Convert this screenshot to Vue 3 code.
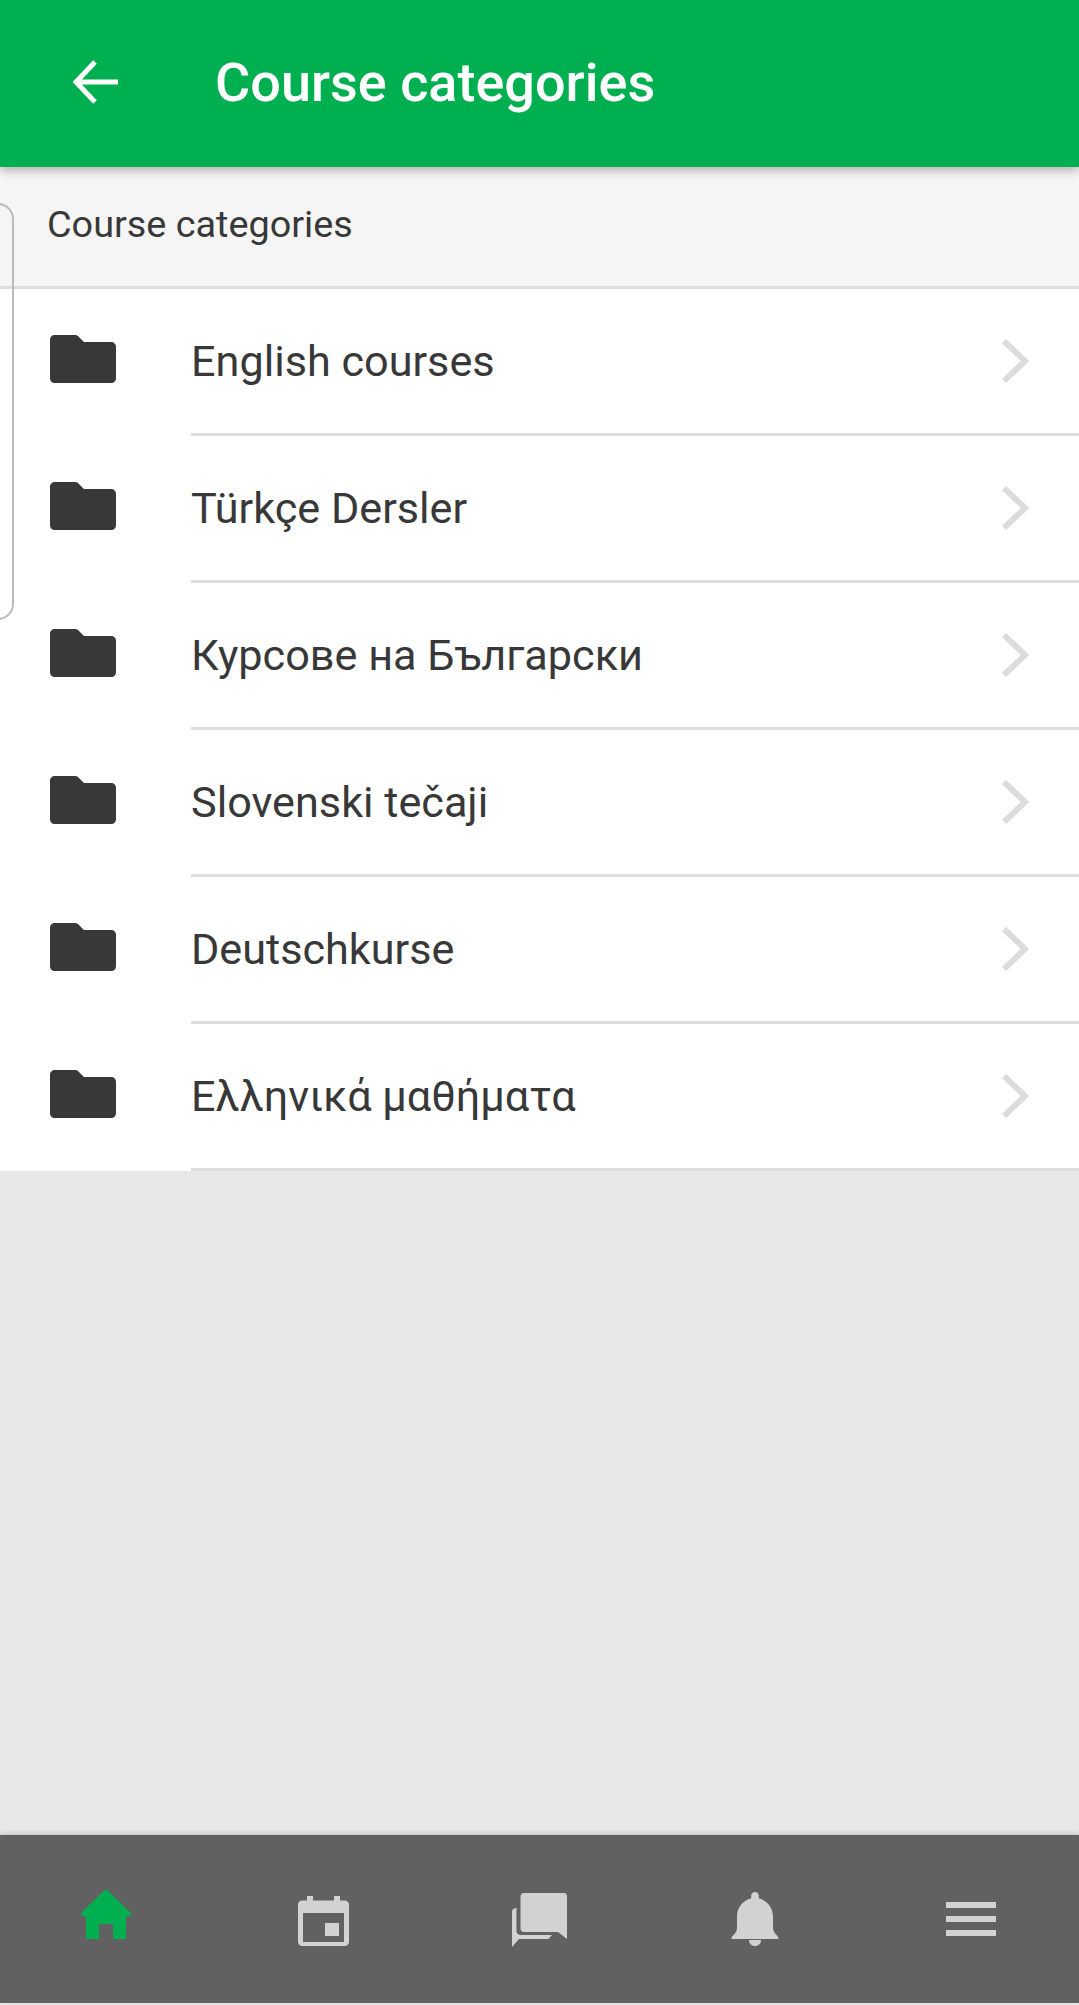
<script setup>
const categorias = [
  "English courses",
  "Türkçe Dersler",
  "Курсове на Български",
  "Slovenski tečaji",
  "Deutschkurse",
  "Ελληνικά μαθήματα",
];
</script>

<template>
  <div class="pagina">
    <header class="topo">
      <svg class="voltar" width="46" height="44" viewBox="0 0 46 44">
        <path d="M45 22H3M22 2 3 22l19 20" fill="none" stroke="#fff" stroke-width="5" />
      </svg>
      <h1>Course categories</h1>
    </header>

    <main class="conteudo">
      <div class="contorno"></div>
      <div class="trilha">Course categories</div>
      <ul class="lista">
        <li v-for="c in categorias" :key="c">
          <div class="icone">
            <svg width="66" height="48" viewBox="0 0 66 48">
              <path d="M5 0h20c1.500 0 2.500.5 3.500 1.500L34 7h27c3 0 5 2 5 5v31c0 3-2 5-5 5H5c-3 0-5-2-5-5V5c0-3 2-5 5-5z" fill="#383838" />
            </svg>
          </div>
          <div class="linha">
            <span>{{ c }}</span>
            <svg width="28" height="44" viewBox="0 0 28 44">
              <path d="M3 2l21 20L3 42" fill="none" stroke="#dcdcdc" stroke-width="6" />
            </svg>
          </div>
        </li>
      </ul>
    </main>

    <nav class="barra">
      <div class="item">
        <svg class="casa" width="52" height="50" viewBox="0 0 52 50">
          <path d="M26 0l26 25-6 3v22H33V35H19v15H6V28l-6-3z" fill="#00b050" />
        </svg>
      </div>
      <div class="item">
        <svg class="desce" width="51" height="50" viewBox="0 0 51 50">
          <path fill-rule="evenodd" d="M9 0h6v4.500h21V0h6v4.500h5c2.200 0 4 1.800 4 4V46c0 2.200-1.800 4-4 4H4c-2.200 0-4-1.800-4-4V8.500c0-2.200 1.800-4 4-4h5zM5 17v29h41V17zm22 10h14v13H27z" fill="#d2d2d2" />
        </svg>
      </div>
      <div class="item">
        <svg class="chat" width="55" height="54" viewBox="0 0 55 54">
          <path d="M12 0h40c1.800 0 3 1.200 3 3v43l-9-7H12c-2 0-3.500-1.500-3.500-3.500V3.500C8.500 1.500 10 0 12 0z" fill="#d2d2d2" />
          <path d="M4.500 15v23c0 2.500 2 4 4.500 4h31l-3.500 4H7l-7 8V18c0-1.500 2-3 4.500-3z" fill="#d2d2d2" />
        </svg>
      </div>
      <div class="item">
        <svg width="48" height="54" viewBox="0 0 48 54">
          <path d="M24 0c2.200 0 3.800 1.600 3.800 3.800v2.500C36 8.500 42 15 42 25v11c0 3 2 5.500 4 7.500 1.500 1.500 2 3.500 1 3.500H1c-1 0-.5-2 1-3.500 2-2 4-4.500 4-7.500V25c0-10 6-16.500 14.200-18.700V3.800C20.200 1.600 21.800 0 24 0z" fill="#d2d2d2" />
          <path d="M18 48h12c0 3.500-2.500 6-6 6s-6-2.500-6-6z" fill="#d2d2d2" />
        </svg>
      </div>
      <div class="item">
        <svg width="50" height="34" viewBox="0 0 50 34">
          <rect width="50" height="6" fill="#d2d2d2" />
          <rect y="14" width="50" height="6" fill="#d2d2d2" />
          <rect y="28" width="50" height="6" fill="#d2d2d2" />
        </svg>
      </div>
    </nav>
  </div>
</template>

<style>
html,
body {
  margin: 0;
  background: #e8e8e8;
}
</style>

<style scoped>
.pagina {
  height: 2005px;
  display: flex;
  flex-direction: column;
  font-family: Roboto, "Noto Sans", sans-serif;
  color: #383838;
  overflow: hidden;
}

.topo {
  height: 167px;
  flex-shrink: 0;
  background: #00b050;
  display: flex;
  align-items: center;
  padding-left: 73px;
  box-shadow: 0 3px 10px rgba(0, 0, 0, 0.3);
  position: relative;
  z-index: 2;
  box-sizing: border-box;
}

.topo h1 {
  margin: 0 0 2px 96px;
  font-size: 54px;
  font-weight: 500;
  color: #fff;
}

.voltar {
  flex-shrink: 0;
  margin-top: -3px;
}

.conteudo {
  flex: 1;
  position: relative;
}

.contorno {
  position: absolute;
  left: -32px;
  top: 36px;
  width: 42px;
  height: 413px;
  border: 2px solid #bbb;
  border-radius: 16px;
}

.trilha {
  height: 122px;
  background: #f5f5f5;
  border-bottom: 3px solid #ddd;
  display: flex;
  align-items: center;
  padding-left: 47px;
  padding-bottom: 6px;
  box-sizing: border-box;
  font-size: 37.800px;
}

.lista {
  margin: 0;
  padding: 0;
  list-style: none;
  background: #fff;
}

.lista li {
  display: flex;
  height: 147px;
}

.icone {
  width: 191px;
  flex-shrink: 0;
  padding-left: 50px;
  padding-bottom: 8px;
  box-sizing: border-box;
  display: flex;
  align-items: center;
}

.linha {
  flex: 1;
  display: flex;
  align-items: center;
  justify-content: space-between;
  padding-right: 50px;
  border-bottom: 3px solid #ddd;
  font-size: 43.200px;
}

.barra {
  height: 168px;
  margin-bottom: 2px;
  flex-shrink: 0;
  background: #616161;
  display: grid;
  grid-template-columns: repeat(5, 1fr);
  box-shadow: 0 -2px 4px rgba(0, 0, 0, 0.15);
}

.item {
  display: flex;
  align-items: center;
  justify-content: center;
}

.casa {
  margin: 0 3px 11px 0;
}

.desce {
  margin-top: 4px;
}

.chat {
  margin-top: 2px;
}
</style>
